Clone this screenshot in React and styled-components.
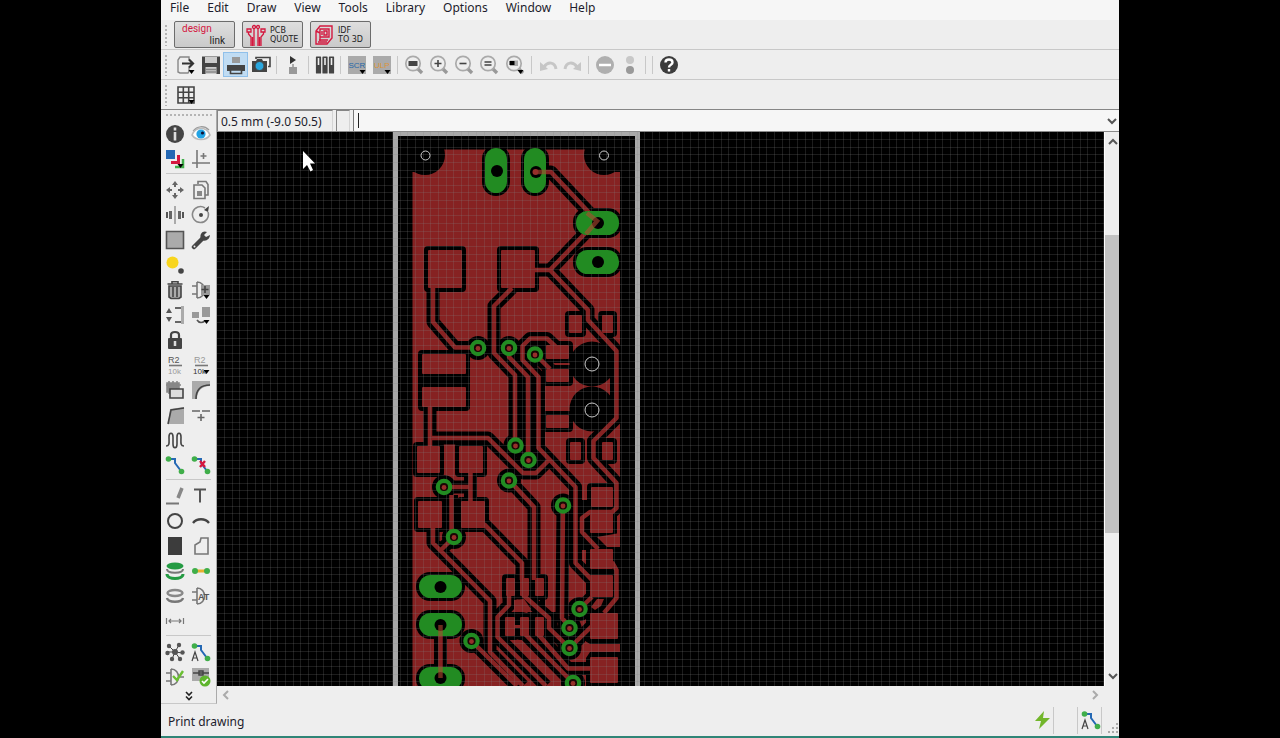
import React from 'react';
import styled, { createGlobalStyle, css } from 'styled-components';

const colours = {
    chrome: '#eeeeee',
    menu: '#f6f6f6',
    line: '#c8c8c8',
    dark: '#444444',
    mid: '#8c8c8c',
    light: '#b0b0b0',
    pink: '#d4183f',
    blue: '#2468b4',
    green: '#3fae49',
    copper: '#862222',
    pad: '#228b22',
};

const GlobalStyle = createGlobalStyle`
    * { box-sizing: border-box; }
    body {
        margin: 0;
        background: #000;
        font-family: 'Noto Sans', 'Open Sans', sans-serif;
        font-size: 12px;
        color: #1c1c2c;
    }
    button { font: inherit; color: inherit; }
`;

const Window = styled.div`
    max-width: 958px;
    min-height: 100vh;
    margin: 0 auto;
    display: flex;
    flex-direction: column;
    background: ${colours.chrome};
    border-bottom: 2px solid #2f8577;
`;
const MenuBar = styled.nav`
    display: flex;
    height: 20px;
    padding-left: 9px;
    gap: 18px;
    background: ${colours.menu};
`;
const MenuItem = styled.button`
    border: 0;
    padding: 0;
    height: 16px;
    line-height: 16px;
    background: none;
`;
const Toolbar = styled.div`
    display: flex;
    align-items: center;
    height: 30px;
    padding-left: 3px;
    border-bottom: 1px solid ${({ $last }) => ($last ? '#858585' : colours.line)};
`;
const Grip = styled.div`
    width: 4px;
    height: 22px;
    margin-right: ${({ $gap }) => $gap || 5}px;
    background: radial-gradient(circle at 2px 2px, #b4b4b4 1px, transparent 1px) 0 0 / 4px 4px;
`;
const PaletteGrip = styled.div`
    height: 4px;
    margin: 3px 4px 4px;
    background: radial-gradient(circle at 2px 2px, #b4b4b4 1px, transparent 1px) 0 0 / 4px 4px;
`;
const ToolButton = styled.button`
    display: flex;
    align-items: center;
    justify-content: center;
    width: ${({ $wide }) => ($wide ? 27 : 25)}px;
    height: 25px;
    padding: 0;
    border: 1px solid transparent;
    background: none;
    svg { flex: none; }
    ${({ $active }) =>
        $active &&
        css`
            background: #c0dcf3;
            border-color: #90c0ea;
        `}
`;
const Divider = styled.div`
    width: 1px;
    height: 18px;
    margin: 0 3px;
    background: ${colours.line};
`;
const LinkButton = styled.button`
    display: flex;
    align-items: center;
    width: 61px;
    height: 27px;
    margin-right: 7px;
    padding: 0 3px;
    gap: 4px;
    border: 1px solid #6c6c6c;
    border-radius: 2px;
    background: linear-gradient(#dedede, #cacaca);
    text-align: left;
`;
const LinkLabel = styled.span`
    font: 8px/9px 'DejaVu Sans', sans-serif;
    color: #222;
`;
const DesignLabel = styled.span`
    display: flex;
    flex-direction: column;
    flex: 1;
    padding: 0 6px 0 4px;
    font: 10px/12px Roboto, sans-serif;
    color: ${colours.pink};
`;
const DesignTail = styled.span`
    align-self: flex-end;
    color: #222;
`;
const Workspace = styled.div`
    display: grid;
    grid-template-columns: 56px minmax(0, 1fr);
    flex: 1;
`;
const Palette = styled.aside`
    border-right: 1px solid #aaa;
    border-bottom: 1px solid ${colours.line};
`;
const PaletteGroup = styled.div`
    display: grid;
    grid-template-columns: 26px 26px;
    grid-auto-rows: 25px;
    padding-left: 1px;
    justify-items: center;
    & + & {
        position: relative;
        margin-top: 6px;
    }
    & + &::before {
        content: '';
        position: absolute;
        top: -4px;
        left: 5px;
        right: 5px;
        height: 1px;
        background: ${colours.line};
    }
`;
const MoreButton = styled.button`
    display: block;
    width: 100%;
    height: 14px;
    padding: 0;
    border: 0;
    background: none;
    line-height: 0;
`;
const Editor = styled.main`
    display: flex;
    flex-direction: column;
`;
const CommandRow = styled.div`
    display: flex;
    height: 22px;
    gap: 3px;
    border-bottom: 1px solid #8a8a8a;
`;
const Readout = styled.div`
    width: ${({ $width }) => $width}px;
    padding-left: 3px;
    line-height: 21px;
    white-space: nowrap;
    border: 1px solid #858585;
    border-right-color: #d4d4d4;
    border-bottom: 0;
`;
const CommandBox = styled.div`
    display: flex;
    align-items: center;
    flex: 1;
    padding-left: 4px;
    border-left: 1px solid #777;
    background: ${colours.menu};
`;
const Caret = styled.span`
    width: 1px;
    height: 15px;
    background: #222;
`;
const CommandInput = styled.input`
    flex: 1;
    min-width: 0;
    border: 0;
    outline: 0;
    background: none;
    font: inherit;
`;
const ArrowButton = styled.button`
    display: flex;
    align-items: center;
    justify-content: center;
    width: 15px;
    height: 20px;
    padding: 0;
    border: 0;
    background: none;
`;
const CanvasRow = styled.div`
    display: flex;
    flex: 1;
`;
const Canvas = styled.svg`
    flex: 1;
    min-width: 0;
    display: block;
    background: #000;
`;
const VerticalScroll = styled.div`
    display: flex;
    flex-direction: column;
    width: 15px;
    border-left: 1px solid #fff;
`;
const Track = styled.div`
    flex: ${({ $size }) => $size};
    background: ${({ $thumb }) => ($thumb ? '#c2c2c2' : 'transparent')};
`;
const HorizontalScroll = styled.div`
    display: flex;
    justify-content: space-between;
    align-items: center;
    height: 18px;
    padding: 0 17px 0 1px;
`;
const StatusBar = styled.footer`
    display: flex;
    align-items: center;
    height: 32px;
    padding-left: 7px;
`;
const StatusText = styled.span`
    flex: 1;
    padding-top: 3px;
`;
const StatusCell = styled.div`
    display: flex;
    justify-content: ${({ $end }) => ($end ? 'flex-end' : 'center')};
    width: 24px;
    height: 27px;
    align-items: center;
    border-right: 1px solid ${colours.line};
`;

const Icon = ({ children, size = 20 }) => (
    <svg width={size} height={size} viewBox="0 0 20 20" fill="none" stroke={colours.dark} strokeWidth="1.6" aria-hidden="true">
        {children}
    </svg>
);
const MenuMark = () => <path d="M12.5 15h6l-3 4z" fill="#000" stroke="none" />;
const Lens = ({ children }) => (
    <>
        <path d="M13 13l5 5" stroke="#999" strokeWidth="3.4" />
        <circle cx="9" cy="8.5" r="7.2" fill="#eee" stroke="#aaa" strokeWidth="1.7" />
        {children}
    </>
);
const Route = ({ children }) => (
    <>
        <path d="M4 4h6v4l6 8" stroke={colours.blue} strokeWidth="2" />
        <circle cx="3.5" cy="4" r="2.8" fill={colours.green} stroke="none" />
        <circle cx="16.5" cy="16.5" r="2.8" fill={colours.green} stroke="none" />
        {children}
    </>
);

const icons = {
    export: (
        <>
            <path d="M13 5V2H4L2 5v12l2 1h8l1-2v-4" stroke="#888" strokeWidth="1.400" />
            <path d="M6 8.500h10M13 4.500l4 4-4 4" stroke="#333" strokeWidth="2.200" />
            <MenuMark />
        </>
    ),
    save: (
        <>
            <path d="M1 1.500h18V19H1z" fill="#444" stroke="none" />
            <path d="M4 2h12v6H4zM4.500 12h11v7h-11z" fill="#ccc" stroke="none" />
            <path d="M4.500 14.500h11M4.500 17h11" stroke="#888" />
        </>
    ),
    print: (
        <>
            <path d="M6 2h8v6H6z" fill="#999" stroke="none" />
            <path d="M1 10h18v6H1z" fill="#444" stroke="none" />
            <path d="M4.500 15h11v3.500h-11z" fill="#c0dcf3" stroke="#444" />
        </>
    ),
    cam: (
        <>
            <path d="M5 4V2.500h14v9h-2" />
            <path d="M1 6h4l1-2h5l1 2h4v11H1z" fill="#444" stroke="none" />
            <circle cx="8.500" cy="11" r="4.500" fill="#2aa7df" stroke="#444" strokeWidth="1" />
        </>
    ),
    switchBoard: (
        <>
            <path d="M7 1l6 4-6 4z" fill="#333" stroke="none" />
            <path d="M6 12h8v7H6z" fill="#999" stroke="none" />
            <path d="M10 9v3" stroke="#999" />
        </>
    ),
    library: (
        <>
            <path d="M1.500 2h4v16h-4zM8 2h4v16H8zM14.500 2h4v16h-4z" fill="#444" strokeWidth="1.200" strokeLinejoin="round" />
            <path d="M3.500 3v7M10 3v7M16.500 3v7" stroke="#eee" />
        </>
    ),
    scr: (
        <>
            <path d="M1 1h18v18H1z" fill="#aaa" stroke="none" />
            <text x="1.500" y="13" fontSize="8" fontFamily="Liberation Sans" fill="#2468a8" stroke="none">SCR</text>
            <MenuMark />
        </>
    ),
    ulp: (
        <>
            <path d="M1 1h18v18H1z" fill="#aaa" stroke="none" />
            <text x="2" y="13" fontSize="8" fontFamily="Liberation Sans" fill="#dd9438" stroke="none">ULP</text>
            <MenuMark />
        </>
    ),
    zoomFit: <Lens><path d="M4.500 6h9v5h-9z" fill="#444" stroke="none" /></Lens>,
    zoomIn: <Lens><path d="M5.500 8.500h7M9 5v7" /></Lens>,
    zoomOut: <Lens><path d="M5.500 8.500h7" /></Lens>,
    zoomRedraw: <Lens><path d="M5.500 7h7M5.500 10h7" /></Lens>,
    zoomSelect: (
        <Lens>
            <path d="M5 5.500h8v5.500H5z" fill="#aaa" stroke="none" />
            <path d="M4.500 6h5v4h-5z" fill="#000" stroke="none" />
            <MenuMark />
        </Lens>
    ),
    undo: (
        <>
            <path d="M18 14c-1-7-8-8-12-2" stroke="#c6c6c6" strokeWidth="3" />
            <path d="M2 7v9l8-2z" fill="#c6c6c6" stroke="none" />
        </>
    ),
    redo: (
        <>
            <path d="M2 14c1-7 8-8 12-2" stroke="#c6c6c6" strokeWidth="3" />
            <path d="M18 7v9l-8-2z" fill="#c6c6c6" stroke="none" />
        </>
    ),
    stop: (
        <>
            <circle cx="10" cy="10" r="9" fill="#afafaf" stroke="none" />
            <path d="M4 10h12" stroke="#fff" strokeWidth="2.500" />
        </>
    ),
    go: (
        <>
            <circle cx="10" cy="5" r="4" fill="#c8c8c8" stroke="none" />
            <circle cx="10" cy="15" r="4" fill="#999" stroke="none" />
        </>
    ),
    help: (
        <>
            <circle cx="10" cy="10" r="9" fill="#3c3c3c" stroke="none" />
            <path d="M6.500 7.500c0-4 7-4 7 0 0 2.500-3.500 2-3.500 5M10 14v2.500" stroke="#fff" strokeWidth="2.400" />
        </>
    ),
    grid: (
        <>
            <path d="M2 2h16v16H2zM7.300 2v16M12.700 2v16M2 7.300h16M2 12.700h16" />
            <MenuMark />
        </>
    ),
    info: (
        <>
            <circle cx="10" cy="10" r="9" fill="#444" stroke="none" />
            <path d="M10 3.500v3M10 8v8.500" stroke="#ddd" strokeWidth="2.600" />
        </>
    ),
    show: (
        <>
            <path d="M1 11c4-9 14-9 18 0-4 6-14 6-18 0z" fill="#fff" stroke="#bbb" />
            <circle cx="10" cy="10" r="4.600" fill="#22a3e4" stroke="none" />
            <circle cx="11.500" cy="9" r="1.600" fill="#113" stroke="none" />
            <path d="M2 7c4-5 11-6 16-1" stroke="#999" strokeWidth="1.200" />
        </>
    ),
    layers: (
        <>
            <path d="M1 1h9v9H1z" fill={colours.blue} stroke="none" />
            <path d="M13.500 6v7.500H6" stroke={colours.pink} strokeWidth="3" />
            <path d="M18 10v8h-8" stroke={colours.green} strokeWidth="2.500" />
            <MenuMark />
        </>
    ),
    mark: <path d="M6 1v18M1 14h18M12.500 4v6M9.500 7h6" stroke="#777" />,
    move: (
        <g fill="#666" stroke="none">
            <path d="M10 1l3 4h-2v2H9V5H7zM10 19l3-4h-2v-2H9v2H7zM1 10l4-3v2h2v2H5v2zM19 10l-4-3v2h-2v2h2v2z" />
        </g>
    ),
    copy: (
        <>
            <path d="M7 4V1.500h8l2 3V15h-3" stroke="#777" />
            <path d="M3 5h8l3 3v10.500H3z" stroke="#777" />
            <path d="M6 11h5v5H6z" fill="#888" stroke="none" />
        </>
    ),
    mirror: (
        <>
            <path d="M10 1v18" stroke="#999" />
            <path d="M1 7h2v6H1zM17 7h2v6h-2z" fill="#555" stroke="none" />
            <path d="M4 6h3v8H4zM13 6h3v8h-3z" fill="#666" stroke="none" />
        </>
    ),
    rotate: (
        <>
            <path d="M14 3a8 8 0 1 0 3 4" stroke="#888" />
            <circle cx="10" cy="10" r="2" fill="#444" stroke="none" />
            <path d="M13 5l5-4-1 6z" fill="#444" stroke="none" />
        </>
    ),
    group: <path d="M1.500 1.500h17v17h-17z" fill="#ababab" stroke="#555" />,
    change: (
        <>
            <path d="M3 17l8-8" strokeWidth="4.500" strokeLinecap="round" />
            <path d="M16 2c-4-2-8 2-6 7 4 4 9 0 9-4l-4 2-2-2z" fill="#444" stroke="none" />
            <circle cx="3.500" cy="16.500" r="1" fill="#eee" stroke="none" />
        </>
    ),
    paste: (
        <>
            <circle cx="7.500" cy="7.500" r="6" fill="#f8d51d" stroke="none" />
            <circle cx="16" cy="16" r="2.800" fill="#444" stroke="none" />
        </>
    ),
    trash: (
        <>
            <path d="M4 6h12v11l-2 1.500H6L4 17z" fill="#aaa" />
            <path d="M2.500 4h15M7 4V1.800h6V4M8 7v10M12 7v10" />
        </>
    ),
    gateAdd: (
        <>
            <path d="M1 6h5M1 14h5M6 2v16M6 2c10 0 10 16 0 16" stroke="#777" />
            <path d="M10 5h9v10h-9z" fill="#999" stroke="none" />
            <path d="M14 6v7M10.500 9.500h7" />
            <MenuMark />
        </>
    ),
    pinswap: (
        <>
            <path d="M4 3l3 5H1zM4 17l3-5H1z" fill="#555" stroke="none" />
            <path d="M10 3h7v14h-7" stroke="#666" strokeWidth="2" />
            <path d="M17.500 1v18" stroke="#aaa" strokeWidth="3" />
        </>
    ),
    replace: (
        <>
            <path d="M1 7h7v6H1zM11 2h8v10h-8z" fill="#999" stroke="none" />
            <path d="M6 15c2 3 5 3 8 1" stroke="#555" />
            <MenuMark />
        </>
    ),
    lock: (
        <>
            <path d="M4 9h12v9H4z" fill="#444" strokeWidth="2" strokeLinejoin="round" />
            <path d="M6 9V5c0-4 8-4 8 0v4" strokeWidth="2.200" />
            <path d="M10 11v5" stroke="#ddd" strokeWidth="2.500" />
        </>
    ),
    name: (
        <>
            <text x="3" y="8" fontSize="9" fontFamily="Liberation Sans" fill="#555" stroke="none">R2</text>
            <path d="M4 10.500h13" stroke="#777" />
            <text x="3" y="19" fontSize="8" fontFamily="Liberation Sans" fill="#999" stroke="none">10k</text>
        </>
    ),
    value: (
        <>
            <text x="3" y="8" fontSize="9" fontFamily="Liberation Sans" fill="#999" stroke="none">R2</text>
            <path d="M4 10.500h13" stroke="#777" />
            <text x="2" y="19" fontSize="8" fontFamily="Liberation Sans" fill="#333" stroke="none">10k</text>
            <MenuMark />
        </>
    ),
    smash: (
        <>
            <path d="M2 3h12v9H2zM4 1v13M8 1v13M12 1v13M1 5h15" fill="#888" stroke="#888" />
            <path d="M5 9h13v9H5z" fill="#ddd" />
        </>
    ),
    miter: (
        <>
            <path d="M1 1h18v5C11 6 6 11 6 19H1z" fill="#aaa" stroke="none" />
            <path d="M5 19C5 10 10 5 19 5" />
        </>
    ),
    split: (
        <>
            <path d="M5 4l14-2v17H3z" fill="#aaa" stroke="none" />
            <path d="M3 19l3-14 13-2" />
        </>
    ),
    optimize: <path d="M1 6h8M11 6h8M10 9v7M6.500 12.500h7" stroke="#666" />,
    meander: <path d="M1 16c4 0 3-4 3-9s4-5 4 0v7c0 5 4 5 4 0V7c0-5 4-5 4 0s-1 9 3 9" stroke="#444" />,
    route: <Route />,
    ripup: <Route><path d="M9 6l5 6M14 6l-5 6" stroke={colours.pink} strokeWidth="2.400" /></Route>,
    wire: (
        <>
            <path d="M1 17.500h13" stroke="#777" strokeWidth="2" />
            <path d="M17 2l-4 10" stroke="#888" strokeWidth="3.500" />
        </>
    ),
    text: <path d="M3 3.500h12M9 3.500v13" stroke="#555" strokeWidth="2" />,
    circle: <circle cx="10" cy="10" r="7" strokeWidth="2" />,
    arc: <path d="M2 12c4-5 12-5 16 0" strokeWidth="2.400" />,
    rect: <path d="M3 1h14v18H3z" fill="#3c3c3c" stroke="none" />,
    polygon: <path d="M4 18V9l5-3 1-4h7v16z" stroke="#777" />,
    via: (
        <>
            <path d="M2 8c0 5 16 5 16 0" stroke="#777" strokeWidth="2" />
            <path d="M2 13c0 6 16 6 16 0" stroke="#249b43" strokeWidth="3" />
            <ellipse cx="10" cy="5" rx="8.500" ry="3.500" fill="#249b43" stroke="none" />
        </>
    ),
    signal: (
        <>
            <path d="M3 10h14" stroke="#e6b12e" strokeWidth="3" />
            <circle cx="4" cy="10" r="3" fill={colours.green} stroke="none" />
            <circle cx="16" cy="10" r="3" fill={colours.green} stroke="none" />
        </>
    ),
    hole: (
        <>
            <ellipse cx="10" cy="7" rx="7.500" ry="3" stroke="#888" strokeWidth="2.400" />
            <path d="M2 12c1 5 15 5 16 0" stroke="#777" strokeWidth="2.400" />
        </>
    ),
    attribute: (
        <>
            <path d="M1 6h5M1 14h5M6 2v16M6 2c10 0 10 16 0 16" stroke="#777" />
            <text x="7" y="13.500" fontSize="9" fontWeight="700" fontFamily="Liberation Sans" fill="#555" stroke="none">AT</text>
        </>
    ),
    dimension: <path d="M1.500 7v6M18.500 7v6M4 10h12M6 8l-2 2 2 2M14 8l2 2-2 2" stroke="#777" strokeWidth="1.200" />,
    ratsnest: (
        <>
            <path d="M10 10L4 4M10 10l4-7M10 10l8 1M10 10l5 7M10 10l-3 7M10 10H2" strokeWidth="1" />
            <g fill="#555" stroke="none">
                <circle cx="10" cy="10" r="3" />
                <circle cx="4" cy="4" r="2.200" />
                <circle cx="14" cy="3" r="2.200" />
                <circle cx="17.500" cy="10.500" r="2.200" />
                <circle cx="15" cy="17" r="2.200" />
                <circle cx="7" cy="17" r="2.200" />
                <circle cx="2.500" cy="11" r="2.200" />
            </g>
        </>
    ),
    autoroute: (
        <Route>
            <path d="M1 19l3-9 3 9M2 16h4" stroke="#444" strokeWidth="1.200" />
        </Route>
    ),
    erc: (
        <>
            <path d="M1 6h5M1 14h5M6 2v16M6 2c10 0 10 16 0 16M13 10h6" stroke="#777" />
            <path d="M8 9l4 4 6-9" stroke="#6abf32" strokeWidth="2.400" />
        </>
    ),
    drc: (
        <>
            <path d="M1 1h17v13H1z" fill="#aaa" stroke="none" />
            <path d="M2 6h16M8 4h4v4H8z" strokeWidth="1.500" />
            <circle cx="14" cy="14" r="5.500" fill="#5eb52c" stroke="none" />
            <path d="M11 14l2 2 4-4" stroke="#fff" />
        </>
    ),
};

const fileTools = [
    ['export', 'save', 'print', 'cam'],
    ['switchBoard'],
    ['library'],
    ['scr', 'ulp'],
    ['zoomFit', 'zoomIn', 'zoomOut', 'zoomRedraw', 'zoomSelect'],
    ['undo', 'redo'],
    ['stop', 'go'],
    [],
    ['help'],
];

// null leaves a cell of the two-column palette empty
const paletteTools = [
    ['info', 'show', 'layers', 'mark'],
    [
        'move', 'copy', 'mirror', 'rotate', 'group', 'change', 'paste', null, 'trash', 'gateAdd', 'pinswap', 'replace',
        'lock', null, 'name', 'value', 'smash', 'miter', 'split', 'optimize', 'meander', null, 'route', 'ripup',
    ],
    ['wire', 'text', 'circle', 'arc', 'rect', 'polygon', 'via', 'signal', 'hole', 'attribute', 'dimension', null],
    ['ratsnest', 'autoroute', 'erc', 'drc'],
];

const traces = [
    'M433 288V322L455 347.500H478',
    'M512 288L494 306V353L515 375V445',
    'M509 348V357L528 377V460',
    'M557 348L547 338.500H530L522.500 346V360L538.500 377V448L575.500 487V563L592 580',
    'M535 354L550 369',
    'M535.500 172H551L597 221L550 270H534',
    'M550 270L588 310V320L616.500 351V418L593.500 441V458L616.500 483V508L612 512H590L582 518V532L598 549',
    'M430 406V446M430 438H488L523 473H536L549 460',
    'M444 487H470.500M470.500 470V502',
    'M451.500 495V530L454 537L441 550',
    'M509 480L534 507V580',
    'M563 505L562 618L569.500 627',
    'M433 528V543L490 601V652L523 686',
    'M484 524L522 563V580',
    'M509 595V605L497.500 617V637L546 686',
    'M523 595L549 618V628L569.500 648L592 626',
    'M525 634L573 683',
    'M538 634L568 668.500H592',
    'M471.500 641L517 686',
    'M440.500 627V678',
    'M579.500 609L592 597',
    'M612 562L616.500 570V598L604 613',
];

// x, y, width, height of the surface mount pads
const smdPads = [
    [428, 250, 34, 38], [501, 250, 34, 38],
    [422, 354, 44, 20], [422, 387, 44, 20],
    [546, 345, 23, 14], [546, 369, 23, 13], [546, 415, 23, 13],
    [569, 315, 13, 18], [602, 315, 11, 18], [570, 442, 11, 18], [602, 442, 11, 18],
    [417, 446, 23, 27], [459, 446, 24, 27], [418, 501, 24, 27], [461, 501, 24, 27],
    [591, 487, 22, 20], [590, 513, 23, 20], [590, 549, 23, 20], [590, 575, 23, 22],
    [590, 613, 28, 26], [590, 657, 28, 26],
    [506, 578, 9, 18], [520, 578, 9, 18], [535, 578, 9, 18],
    [505, 617, 10, 19], [520, 617, 9, 19], [535, 617, 9, 19],
];

// x, y, width, height and drill centre
const throughPads = [
    [485, 148, 22, 45, 497, 171], [524, 148, 22, 45, 536, 172],
    [576, 211, 43, 24, 598, 223], [576, 250, 43, 24, 598, 262],
    [419, 575, 43, 23, 440.5, 587], [419, 613, 43, 23, 440.5, 625], [419, 667, 43, 23, 440.5, 678],
];

const vias = [
    [478, 348], [509, 348], [535, 354.5], [515.5, 445.5], [528.5, 460], [444, 487], [509, 480.5], [563, 505.5],
    [454, 537], [579.5, 609], [569.5, 628], [569.5, 648], [471.5, 641], [573, 683],
];

const gridLines = (first, count, draw) =>
    Array.from({ length: count }, (_, i) => draw(Math.round(first + i * 7.64) + 0.5)).join('');

const gridPath =
    gridLines(224, 240, (x) => `M${x} 100V2100`) + gridLines(139, 240, (y) => `M200 ${y}H2100`);

const Board = () => (
    <Canvas role="img" aria-label="Board layout">
        <g transform="translate(-217 -132)">
            <path d="M412.500 149.500H620V700H412.500z" fill={colours.copper} />
            <g fill="#000">
                <circle cx="425" cy="155" r="20" />
                <path d="M405 140h20v32h-20zM604 140h20v32h-20z" />
                <circle cx="604" cy="155" r="20" />
                <circle cx="592" cy="364" r="22.500" />
                <circle cx="592" cy="409" r="22.500" />
                <path d="M592 344h21v32l-12 8h-9zM592 390h9l12 8v30h-21z" />
                <path d="M586 535H621V700H586z" />
                <path d="M500 612h48v27h-48zM466 374h4v13h-52v-13z" />
                <path d="M577 500h14v50h-14z" />
                <path d="M540 590h5v25h-5zM548 612h8l4 30h-14z" />
            </g>
            <g fill="#000" stroke="#000" strokeWidth="8" strokeLinejoin="round">
                {smdPads.map(([x, y, width, height]) => (
                    <rect key={`${x}-${y}`} x={x} y={y} width={width} height={height} />
                ))}
            </g>
            <g fill="#000">
                {throughPads.map(([x, y, width, height]) => (
                    <rect key={`${x}-${y}`} x={x - 3} y={y - 3} width={width + 6} height={height + 6} rx="14" />
                ))}
                {vias.map(([x, y]) => (
                    <circle key={`${x}-${y}`} cx={x} cy={y} r="12" />
                ))}
            </g>
            <path d={traces.join('')} fill="none" stroke="#000" strokeWidth="13" strokeLinejoin="round" />
            <g fill={colours.copper}>
                {smdPads.map(([x, y, width, height]) => (
                    <rect key={`${x}-${y}`} x={x} y={y} width={width} height={height} rx="1" />
                ))}
                <path d="M597 537L620 533V547H607z" />
                <path d="M591 607L597 599H604L601 606L595 610z" />
                <path d="M577 661L584 658L585 641L590 644H620V652H590L584 661z" />
                <path d="M514 625h8v3h-8z" />
                <path d="M514 600l10-1 7 10-4 4-13-3z" />
            </g>
            <path d={traces.join('')} fill="none" stroke={colours.copper} strokeWidth="4.500" strokeLinejoin="round" />
            <path d="M395.500 700V133.500H637.500V700" fill="none" stroke="#a8a8a8" strokeWidth="5" />
            <path d={gridPath} stroke="rgba(130, 130, 130, 0.22)" />
            {throughPads.map(([x, y, width, height, cx, cy]) => (
                <g key={`${x}-${y}`}>
                    <rect x={x} y={y} width={width} height={height} rx="11.500" fill={colours.pad} />
                    <circle cx={cx} cy={cy} r="6" fill="#000" />
                </g>
            ))}
            {vias.map(([x, y]) => (
                <g key={`${x}-${y}`}>
                    <circle cx={x} cy={y} r="6.200" fill="#1a0505" stroke={colours.pad} strokeWidth="4.200" />
                    <circle cx={x} cy={y + 0.5} r="2.400" fill="#96302a" />
                </g>
            ))}
            <path
                d="M536 172H546M587 213L597 221L586 234M440.500 625V636M440.500 667V678"
                fill="none"
                stroke="#b04a30"
                strokeOpacity="0.600"
                strokeWidth="4.500"
            />
            <circle cx="535.500" cy="172" r="3" fill="#96302a" />
            <g fill="none" stroke="#ccc" strokeWidth="1">
                <circle cx="425.500" cy="155.500" r="4.500" />
                <circle cx="604" cy="155.500" r="4.500" />
                <circle cx="592" cy="364" r="7" />
                <circle cx="592" cy="410" r="7" />
            </g>
            <path d="M303 151V169L307 165L310.500 171.500L313 170L310 163.500H315z" fill="#fff" />
        </g>
    </Canvas>
);

const Chevron = ({ turn = 0, colour = '#555' }) => (
    <svg width="10" height="10" viewBox="0 0 10 10" aria-hidden="true">
        <path d="M1 3l4 4 4-4" fill="none" stroke={colour} strokeWidth="2" transform={`rotate(${turn} 5 5)`} />
    </svg>
);

const App = () => (
    <>
        <GlobalStyle />
        <Window>
            <MenuBar>
                {['File', 'Edit', 'Draw', 'View', 'Tools', 'Library', 'Options', 'Window', 'Help'].map((item) => (
                    <MenuItem key={item}>{item}</MenuItem>
                ))}
            </MenuBar>
            <Toolbar>
                <Grip $gap={6} />
                <LinkButton>
                    <DesignLabel>
                        design
                        <DesignTail>link</DesignTail>
                    </DesignLabel>
                </LinkButton>
                <LinkButton>
                    <svg width="20" height="22" viewBox="0 0 20 22" fill="none" stroke={colours.pink} strokeWidth="1.300">
                        <path d="M8 22V4M12 22V4M5 22V13L2.500 10V8M15 22V13l2.500-3V8M6.500 22v-9M13.500 22v-9" />
                        <circle cx="8" cy="3" r="1.500" />
                        <circle cx="12" cy="3" r="1.500" />
                        <path d="M1 5h4v3H1zM15 5h4v3h-4z" />
                    </svg>
                    <LinkLabel>PCB<br />QUOTE</LinkLabel>
                </LinkButton>
                <LinkButton>
                    <svg width="20" height="22" viewBox="0 0 20 22" fill="none" stroke={colours.pink} strokeWidth="1.400">
                        <path d="M6 2h12v12l-5 6H2V7zM2 7l4 2v8M6 5h9v8H6zM5 16h9M4 18h9M8 7v4M10 7h3v4h-3z" />
                    </svg>
                    <LinkLabel>IDF<br />TO 3D</LinkLabel>
                </LinkButton>
            </Toolbar>
            <Toolbar>
                <Grip />
                {fileTools.map((group, index) => (
                    <React.Fragment key={index}>
                        {index > 0 && <Divider />}
                        {group.map((name) => (
                            <ToolButton key={name} aria-label={name} $active={name === 'print'} $wide={name === 'zoomSelect'}>
                                <Icon>{icons[name]}</Icon>
                            </ToolButton>
                        ))}
                    </React.Fragment>
                ))}
            </Toolbar>
            <Toolbar $last>
                <Grip />
                <ToolButton aria-label="grid">
                    <Icon>{icons.grid}</Icon>
                </ToolButton>
            </Toolbar>
            <Workspace>
                <Palette>
                    <PaletteGrip />
                    {paletteTools.map((group, index) => (
                        <PaletteGroup key={index}>
                            {group.map((name, cell) =>
                                name ? (
                                    <ToolButton key={name} aria-label={name}>
                                        <Icon>{icons[name]}</Icon>
                                    </ToolButton>
                                ) : (
                                    <span key={cell} />
                                )
                            )}
                        </PaletteGroup>
                    ))}
                    <MoreButton aria-label="More tools">
                        <svg width="10" height="10" viewBox="0 0 10 10" fill="none" stroke="#222" strokeWidth="1.600">
                            <path d="M2 1l3 3 3-3M2 5.500l3 3 3-3" />
                        </svg>
                    </MoreButton>
                </Palette>
                <Editor>
                    <CommandRow>
                        <Readout $width={116}>0.5 mm (-9.0 50.5)</Readout>
                        <Readout $width={14} />
                        <CommandBox>
                            <Caret />
                            <CommandInput aria-label="Command" />
                            <ArrowButton aria-label="Command history">
                                <Chevron />
                            </ArrowButton>
                        </CommandBox>
                    </CommandRow>
                    <CanvasRow>
                        <Board />
                        <VerticalScroll>
                            <ArrowButton aria-label="Scroll up">
                                <Chevron turn={180} />
                            </ArrowButton>
                            <Track $size={83} />
                            <Track $size={298} $thumb />
                            <Track $size={133} />
                            <ArrowButton aria-label="Scroll down">
                                <Chevron />
                            </ArrowButton>
                        </VerticalScroll>
                    </CanvasRow>
                    <HorizontalScroll>
                        <ArrowButton aria-label="Scroll left">
                            <Chevron turn={90} colour="#aaa" />
                        </ArrowButton>
                        <ArrowButton aria-label="Scroll right">
                            <Chevron turn={-90} colour="#aaa" />
                        </ArrowButton>
                    </HorizontalScroll>
                </Editor>
            </Workspace>
            <StatusBar>
                <StatusText>Print drawing</StatusText>
                <StatusCell>
                    <Icon>
                        <path d="M12 1L3 11h6l-2 8 11-11h-7z" fill="#72b62b" stroke="none" />
                    </Icon>
                </StatusCell>
                <StatusCell />
                <StatusCell $end>
                    <Icon>{icons.autoroute}</Icon>
                </StatusCell>
                <svg width="17" height="28" viewBox="0 0 17 28" fill="#aaa" aria-hidden="true">
                    <path d="M14 17h2v2h-2zM14 21h2v2h-2zM10 21h2v2h-2zM14 25h2v2h-2zM10 25h2v2h-2zM6 25h2v2H6z" />
                </svg>
            </StatusBar>
        </Window>
    </>
);

export default App;
